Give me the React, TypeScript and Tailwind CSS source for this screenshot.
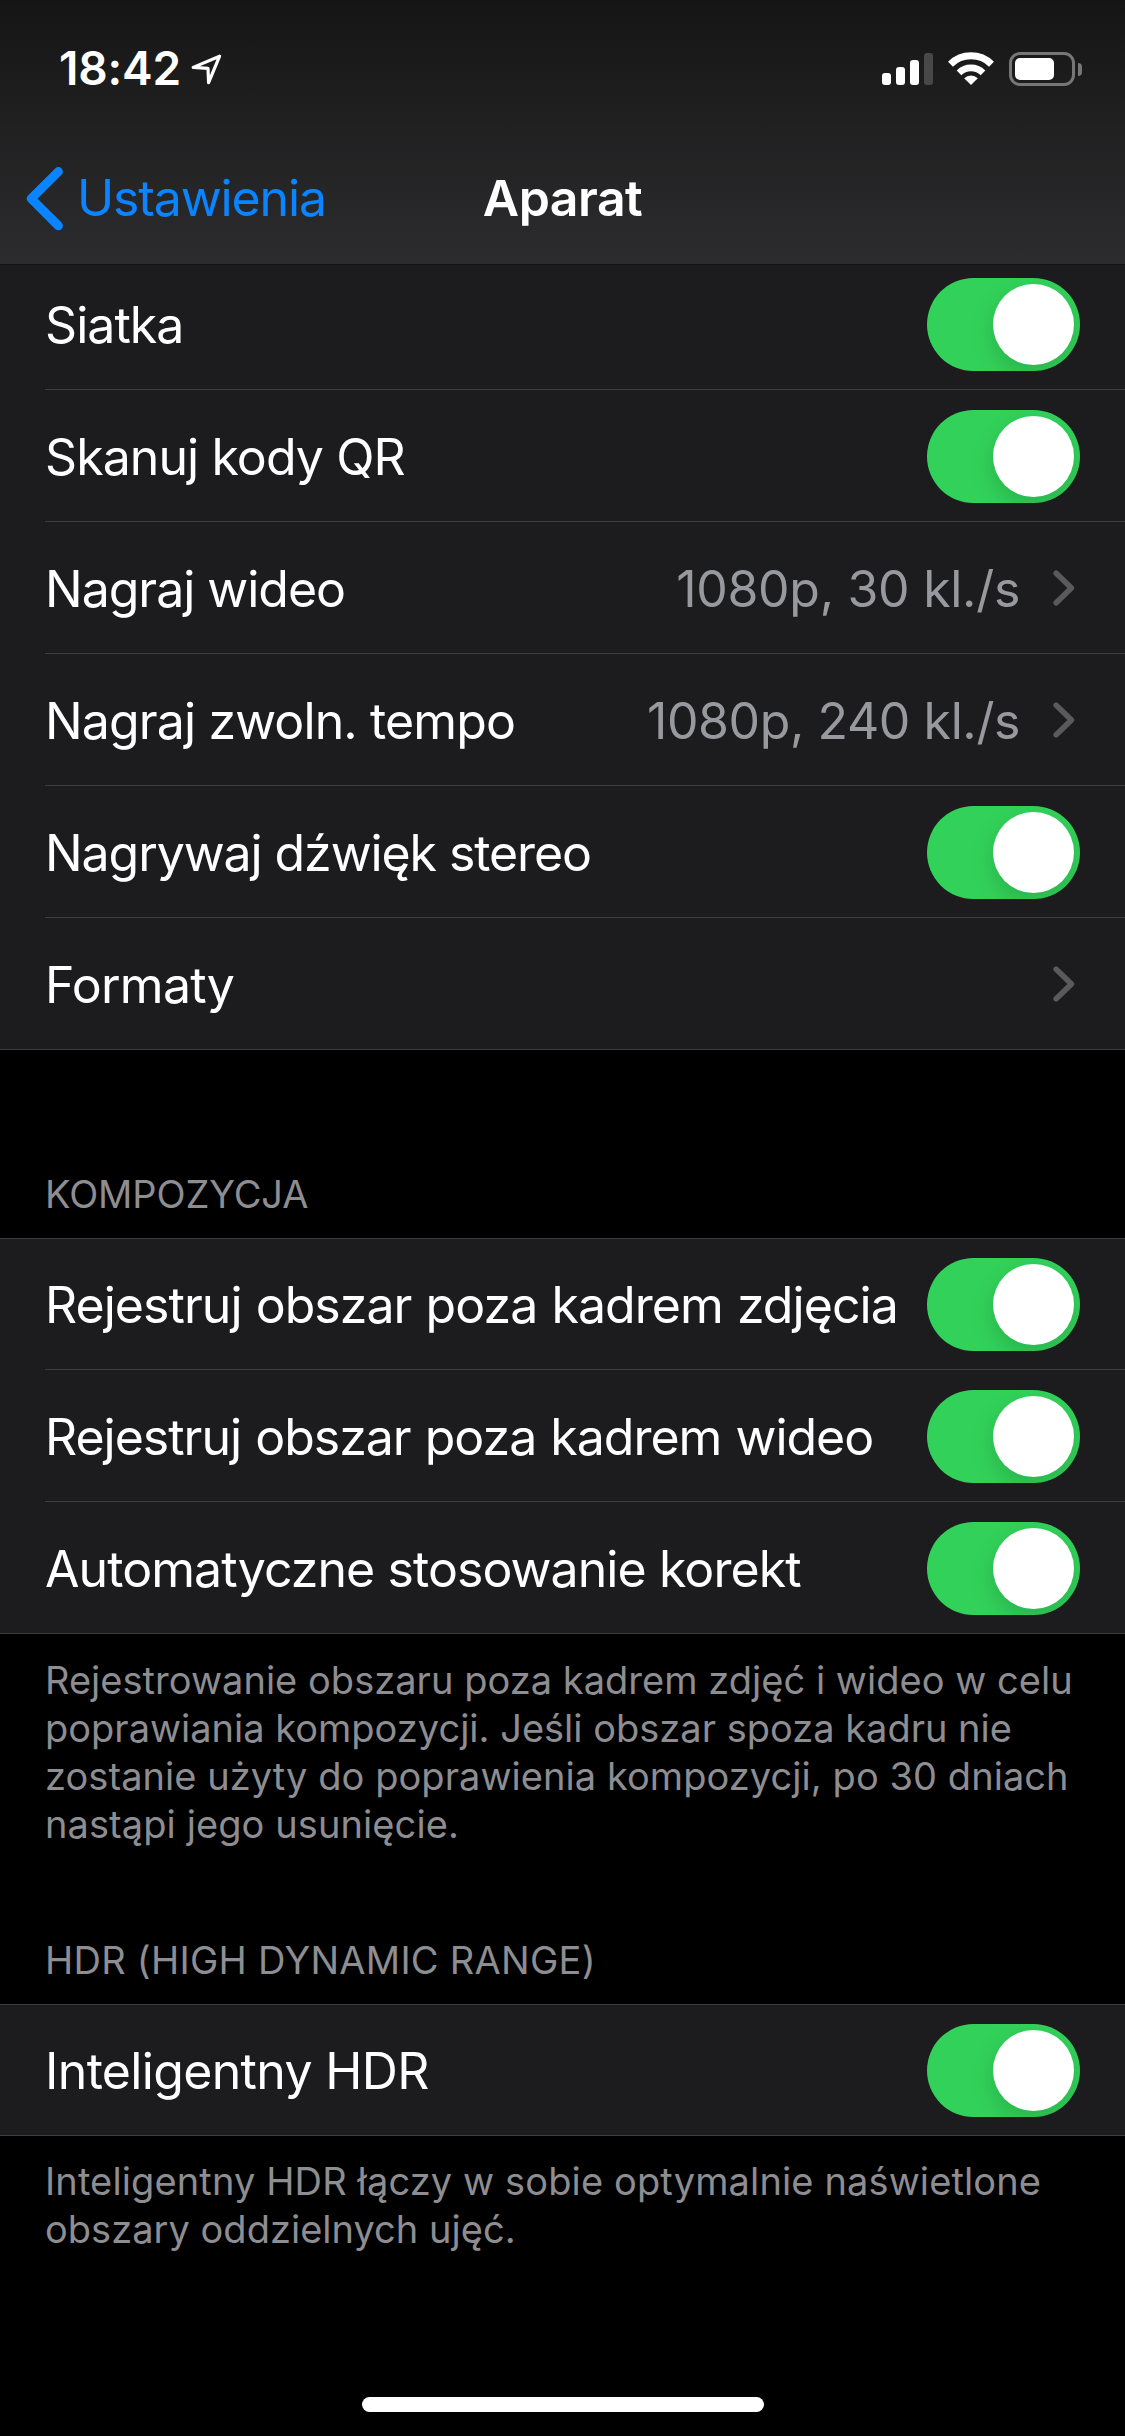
import React from "react";

function LocationArrow() {
  return (
    <svg width="34" height="34" viewBox="0 0 34 34" className="ml-2 mt-0.5" fill="none" stroke="#fff" strokeWidth="3.2" strokeLinejoin="round">
      <path d="M30.6 4.2 4.2 15.4 19 16.4 19.6 30.6Z" />
    </svg>
  );
}

function SignalBars() {
  return (
    <div className="flex h-8 items-end gap-[5px]">
      <div className="h-3 w-[9px] rounded-[3px] bg-white" />
      <div className="h-[18px] w-[9px] rounded-[3px] bg-white" />
      <div className="h-[25px] w-[9px] rounded-[3px] bg-white" />
      <div className="h-8 w-[9px] rounded-[3px] bg-[#484848]" />
    </div>
  );
}

function Wifi() {
  return (
    <svg width="46" height="34" viewBox="0 0 46 34" className="ml-[15px]" fill="none" stroke="#fff">
      <path d="M2.5 12.2A29.3 29.3 0 0 1 43.5 12.2" strokeWidth="7" />
      <path d="M11 20.8A17.2 17.2 0 0 1 35 20.8" strokeWidth="6.6" />
      <path d="M23 33 16.2 26.2A9.8 9.8 0 0 1 29.8 26.2Z" fill="#fff" stroke="none" />
    </svg>
  );
}

function Battery() {
  return (
    <div className="ml-[15px] flex items-center">
      <div className="flex h-[34px] w-[66px] items-center rounded-[11px] border-[3px] border-[#777777] pl-[3px]">
        <div className="h-[22px] w-[39px] rounded-[5px] bg-white" />
      </div>
      <div className="ml-[3px] h-[13px] w-1 rounded-r-full bg-[#777777]" />
    </div>
  );
}

function Toggle({ nudged }: { nudged: boolean }) {
  return (
    <div className={`flex h-[93px] w-[153px] shrink-0 items-center justify-end overflow-hidden rounded-full bg-[#32d25a] pr-1.5 ${nudged ? "mt-0.5" : ""}`}>
      <div className="size-[81px] rounded-full bg-white shadow-[0_9px_24px_rgba(0,0,0,0.16)]" />
    </div>
  );
}

function Chevron() {
  return (
    <svg width="22" height="36" viewBox="0 0 22 36" className="mr-[5px] ml-[33px] shrink-0" fill="none" stroke="#5a5a5e" strokeWidth="5.6" strokeLinecap="round" strokeLinejoin="round">
      <path d="M3.2 3.2 18.4 18 3.2 32.8" />
    </svg>
  );
}

type RowProps = { label: string; tracking: string; value?: string; valueTracking?: string; link?: boolean; last?: boolean; first?: boolean };

function Row({ label, tracking, value, valueTracking, link, last, first }: RowProps) {
  return (
    <div className={`flex items-center justify-between border-b border-[#3d3d40] pr-[45px] ${first ? "h-[131px]" : "h-[132px]"} ${last ? "pl-[45px]" : "ml-[45px]"}`}>
      <span className={`pt-0.5 text-[50px] leading-[60px] whitespace-nowrap text-white ${tracking}`}>{label}</span>
      {link ? (
        <div className="flex items-center">
          <span className={`pt-0.5 text-[50px] leading-[60px] whitespace-nowrap text-[#98989f] ${valueTracking ?? ""}`}>{value}</span>
          <Chevron />
        </div>
      ) : (
        <Toggle nudged={!first} />
      )}
    </div>
  );
}

function SectionTitle({ text, tracking }: { text: string; tracking: string }) {
  return <h2 className={`pb-5 pl-[45px] text-[38px] leading-[48px] text-[#8d8d92] ${tracking}`}>{text}</h2>;
}

function Footnote({ lines }: { lines: [string, string][] }) {
  return (
    <p className="pl-[45px] text-[38px] leading-[48px] whitespace-nowrap text-[#8d8d92]">
      {lines.map(([text, tracking]) => (
        <span key={text} className={`block ${tracking}`}>{text}</span>
      ))}
    </p>
  );
}

export default function App() {
  return (
    <div className="flex h-[2436px] w-[1125px] flex-col overflow-hidden bg-black font-[Inter,'Liberation_Sans',sans-serif]">
      <header className="h-[264px] shrink-0 bg-linear-to-b from-[#151515] via-[#212122] to-[#2c2c2e]">
        <div className="flex h-[137px] justify-between pt-10">
          <div className="flex h-14 items-start pl-[59px]">
            <span className="text-[46px] leading-[56px] font-semibold tracking-[-0.15px] text-white">18:42</span>
            <div className="pt-2.5"><LocationArrow /></div>
          </div>
          <div className="flex h-[34px] items-center pt-6 pr-[43px]">
            <SignalBars />
            <Wifi />
            <Battery />
          </div>
        </div>
        <div className="grid grid-cols-[1fr_auto_1fr] items-start">
          <div className="flex items-start">
            <svg width="38" height="64" viewBox="0 0 38 64" className="mt-[30px] ml-[26px]" fill="none" stroke="#0a84ff" strokeWidth="9" strokeLinecap="round" strokeLinejoin="round">
              <path d="M32.4 4.6 5.2 31.6 32.4 58.8" />
            </svg>
            <span className="mt-[31px] ml-[13px] text-[50px] leading-[60px] tracking-[-1.12px] text-[#0a84ff]">Ustawienia</span>
          </div>
          <h1 className="mt-[31px] text-[50px] leading-[60px] font-semibold tracking-[-0.52px] text-white">Aparat</h1>
          <span />
        </div>
      </header>

      <div className="h-px shrink-0 bg-[#131314]" />
      <section className="-mt-[7px] shrink-0 bg-[#1c1c1e] [clip-path:inset(7px_0_0_0)]">
        <Row label="Siatka" tracking="tracking-[-0.95px]" />
        <Row label="Skanuj kody QR" tracking="tracking-[-0.92px]" />
        <Row label="Nagraj wideo" tracking="tracking-[-1.02px]" link value="1080p, 30 kl./s" valueTracking="tracking-[-0.3px]" />
        <Row label="Nagraj zwoln. tempo" tracking="tracking-[-0.87px]" link value="1080p, 240 kl./s" valueTracking="tracking-[-0.4px]" />
        <Row label="Nagrywaj dźwięk stereo" tracking="tracking-[-1.08px]" />
        <Row label="Formaty" tracking="tracking-[-0.75px]" link last />
      </section>

      <div className="h-[120px] shrink-0" />
      <SectionTitle text="KOMPOZYCJA" tracking="tracking-[-0.1px]" />
      <section className="shrink-0 border-t border-[#3d3d40] bg-[#1c1c1e]">
        <Row label="Rejestruj obszar poza kadrem zdjęcia" tracking="tracking-[-0.95px] [word-spacing:1px]" first />
        <Row label="Rejestruj obszar poza kadrem wideo" tracking="tracking-[-1px] [word-spacing:1px]" />
        <Row label="Automatyczne stosowanie korekt" tracking="tracking-[-0.92px]" last />
      </section>
      <div className="h-[22px] shrink-0" />
      <Footnote
        lines={[
          ["Rejestrowanie obszaru poza kadrem zdjęć i wideo w celu", "tracking-[0.03px]"],
          ["poprawiania kompozycji. Jeśli obszar spoza kadru nie", "tracking-[0px]"],
          ["zostanie użyty do poprawienia kompozycji, po 30 dniach", "tracking-[0.06px]"],
          ["nastąpi jego usunięcie.", "tracking-[0.09px]"],
        ]}
      />

      <div className="h-[88px] shrink-0" />
      <SectionTitle text="HDR (HIGH DYNAMIC RANGE)" tracking="tracking-[0.26px]" />
      <section className="shrink-0 border-t border-[#3d3d40] bg-[#1c1c1e]">
        <Row label="Inteligentny HDR" tracking="tracking-[-0.66px]" first last />
      </section>
      <div className="h-[21px] shrink-0" />
      <Footnote
        lines={[
          ["Inteligentny HDR łączy w sobie optymalnie naświetlone", "tracking-[0.13px]"],
          ["obszary oddzielnych ujęć.", "tracking-[0.02px]"],
        ]}
      />
      <div className="mx-auto mt-auto mb-6 h-[15px] w-[402px] shrink-0 rounded-full bg-white" />
    </div>
  );
}
